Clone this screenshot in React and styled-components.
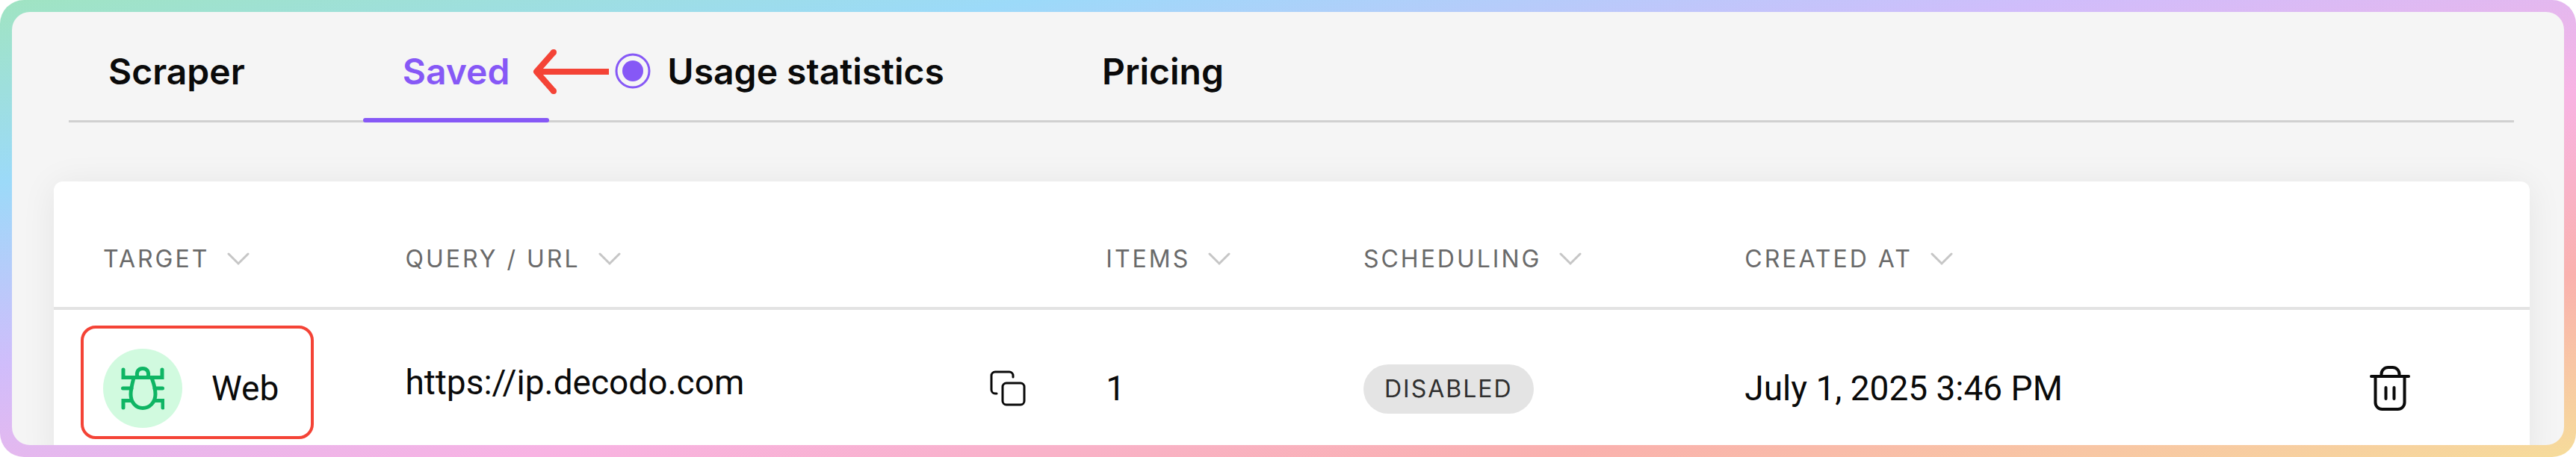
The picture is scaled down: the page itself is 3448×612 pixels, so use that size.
import React from "react";
import styled, { createGlobalStyle } from "styled-components";

const GlobalStyle = createGlobalStyle`
  *, *::before, *::after {
    box-sizing: border-box;
  }

  body {
    margin: 0;
    background: #fff;
    color: #0a0a0a;
    font-family: Inter, "Noto Sans", sans-serif;
  }
`;

const StyledFrame = styled.div`
  height: 100vh;
  padding: 16px;
  border-radius: 32px;
  background: linear-gradient(
    to bottom right,
    #a0e4c2,
    #9cdaf9 20%,
    #d0bdfb 40%,
    #f8b3e3 60%,
    #fab1ae 80%,
    #f6dc9a
  );
`;

const StyledPage = styled.main`
  height: 100%;
  padding-top: 12px;
  overflow: hidden;
  border-radius: 24px;
  background: #f5f5f5;
`;

const StyledTabs = styled.nav`
  display: flex;
  gap: 105px;
  margin: 0 67px 0 76px;
  border-bottom: 3px solid #d0d0d0;
`;

const StyledTab = styled.a`
  position: relative;
  padding: 36px 53px 33px;
  color: ${({ $active }) => ($active ? "#8658f6" : "#0a0a0a")};
  font-size: 48px;
  font-weight: 600;
  line-height: 64px;
  text-decoration: none;
  white-space: nowrap;

  &::after {
    content: "";
    display: ${({ $active }) => ($active ? "block" : "none")};
    position: absolute;
    left: 0;
    right: 0;
    bottom: -3px;
    height: 6px;
    border-radius: 3px;
    background: #8658f6;
  }
`;

const StyledPointer = styled.svg`
  position: absolute;
  left: 100%;
  top: 34px;
  width: 160px;
  height: 68px;
  margin-left: -24px;
  z-index: 1;
`;

const StyledCard = styled.section`
  margin: 79px 46px 0 56px;
  border-radius: 12px;
  background: #fff;
  box-shadow: 0 4px 48px rgba(0, 0, 0, 0.07);
`;

const StyledTable = styled.table`
  width: 100%;
  table-layout: fixed;
  border-collapse: separate;
  border-spacing: 0;
`;

const StyledCol = styled.col`
  width: ${({ $width }) => $width};
`;

const StyledHeadCell = styled.th`
  padding: 80px 33px 40px;
  border-bottom: 4px solid #e3e3e3;
  text-align: left;

  &:first-child {
    padding-left: 66px;
  }
`;

const StyledSort = styled.button`
  display: flex;
  align-items: center;
  gap: 24px;
  padding: 0;
  border: 0;
  background: none;
  color: #6a6a6a;
  font: 400 32px/48px Inter, "Noto Sans", sans-serif;
  letter-spacing: 3px;
  text-transform: uppercase;
  white-space: nowrap;
  cursor: pointer;
`;

const StyledCell = styled.td`
  height: 210px;
  padding: 0 33px;
  font-family: Roboto, sans-serif;
  font-size: 46px;
  line-height: 64px;
  white-space: nowrap;

  &:first-child {
    padding-left: 66px;
  }

  &:last-child {
    padding-right: 152px;
    text-align: right;
  }
`;

const StyledTarget = styled.div`
  position: relative;
  display: inline-flex;
  align-items: center;
  gap: 39px;
`;

const StyledHighlight = styled.span`
  position: absolute;
  inset: -31px -47px -15px -30px;
  border: 4px solid #f44336;
  border-radius: 20px;
`;

const StyledBadge = styled.span`
  display: flex;
  align-items: center;
  justify-content: center;
  width: 106px;
  height: 106px;
  border-radius: 50%;
  background: #d1fadf;
`;

const StyledQuery = styled.div`
  display: flex;
  align-items: center;
  justify-content: space-between;
  padding-right: 33px;
`;

const StyledUrl = styled.a`
  padding-bottom: 16px;
  color: inherit;
  text-decoration: none;
`;

const StyledPill = styled.span`
  display: inline-block;
  padding: 0 28px;
  border-radius: 33px;
  background: #e4e4e4;
  color: #303030;
  font: 400 32px/66px Inter, "Noto Sans", sans-serif;
  letter-spacing: 2px;
  vertical-align: middle;
`;

const StyledIconButton = styled.button`
  display: inline-flex;
  padding: 8px;
  border: 0;
  background: none;
  color: #0a0a0a;
  vertical-align: middle;
  cursor: pointer;
`;

const tabs = ["Scraper", "Saved", "Usage statistics", "Pricing"];

const columns = [
  { label: "Target", width: "13.2%" },
  { label: "Query / URL", width: "28.3%" },
  { label: "Items", width: "10.4%" },
  { label: "Scheduling", width: "15.4%" },
  { label: "Created at", width: "20%" },
];

const rows = [
  {
    target: "Web",
    url: "https://ip.decodo.com",
    items: 1,
    scheduling: "DISABLED",
    createdAt: "July 1, 2025 3:46 PM",
  },
];

function Pointer() {
  return (
    <StyledPointer viewBox="0 0 160 68" fill="none" aria-hidden="true">
      <path d="M30 8 7 34l23 26M7 34h97" stroke="#f44336" strokeWidth="8" strokeLinecap="butt" strokeLinejoin="round" />
      <circle cx="30" cy="8" r="4" fill="#f44336" />
      <circle cx="30" cy="60" r="4" fill="#f44336" />
      <circle cx="136" cy="33" r="22" stroke="#8658f6" strokeWidth="3" />
      <circle cx="136" cy="33" r="14" fill="#8658f6" />
    </StyledPointer>
  );
}

function Chevron() {
  return (
    <svg width="30" height="18" viewBox="0 0 30 18" fill="none" aria-hidden="true">
      <path d="m2 2 13 13L28 2" stroke="#c6c6c6" strokeWidth="3" strokeLinecap="round" />
    </svg>
  );
}

function BugIcon() {
  return (
    <svg width="58" height="58" viewBox="0 0 58 58" fill="none" stroke="#0fb564" strokeWidth="5" aria-hidden="true">
      <path d="M3 4v10.500h52V4" strokeLinecap="round" />
      <path d="M22 14c-2-7 1-11.500 7-11.500S38 7 36 14" />
      <path d="M17 15c-2 8-4 15-4 22 0 11 7 18.500 16 18.500S46 48 46 37c0-7-2-14-5-22" />
      <path d="M2.500 29H14M45 29h10.500" strokeLinecap="round" />
      <path d="M3 55V45.500h11M56 55V45.500H45" strokeLinecap="round" />
    </svg>
  );
}

function CopyIcon() {
  return (
    <svg width="48" height="48" viewBox="0 0 48 48" fill="none" stroke="currentColor" strokeWidth="3" strokeLinecap="round">
      <rect x="17" y="17" width="29" height="29" rx="5" />
      <path d="M9 31H7a5 5 0 0 1-5-5V7a5 5 0 0 1 5-5h19a5 5 0 0 1 5 5v2" />
    </svg>
  );
}

function TrashIcon() {
  return (
    <svg width="54" height="62" viewBox="0 0 54 62" fill="none" stroke="currentColor" strokeWidth="4" strokeLinecap="round">
      <path d="M2 15h50" />
      <path d="M15.500 15v-3a9 9 0 0 1 9-9h6a9 9 0 0 1 9 9v3" />
      <path d="M7.500 15v35a9 9 0 0 0 9 9h21a9 9 0 0 0 9-9V15" />
      <path d="M21.500 30v15M32.500 30v15" />
    </svg>
  );
}

function SavedTable() {
  return (
    <StyledTable>
      <colgroup>
        {columns.map(({ label, width }) => (
          <StyledCol key={label} $width={width} />
        ))}
        <col />
      </colgroup>
      <thead>
        <tr>
          {columns.map(({ label }) => (
            <StyledHeadCell key={label} scope="col">
              <StyledSort type="button">
                {label}
                <Chevron />
              </StyledSort>
            </StyledHeadCell>
          ))}
          <StyledHeadCell as="td" />
        </tr>
      </thead>
      <tbody>
        {rows.map((row) => (
          <tr key={row.url}>
            <StyledCell>
              <StyledTarget>
                <StyledHighlight />
                <StyledBadge>
                  <BugIcon />
                </StyledBadge>
                {row.target}
              </StyledTarget>
            </StyledCell>
            <StyledCell>
              <StyledQuery>
                <StyledUrl href={row.url}>{row.url}</StyledUrl>
                <StyledIconButton type="button" aria-label="Copy">
                  <CopyIcon />
                </StyledIconButton>
              </StyledQuery>
            </StyledCell>
            <StyledCell>{row.items}</StyledCell>
            <StyledCell>
              <StyledPill>{row.scheduling}</StyledPill>
            </StyledCell>
            <StyledCell>{row.createdAt}</StyledCell>
            <StyledCell>
              <StyledIconButton type="button" aria-label="Delete">
                <TrashIcon />
              </StyledIconButton>
            </StyledCell>
          </tr>
        ))}
      </tbody>
    </StyledTable>
  );
}

function App() {
  return (
    <>
      <GlobalStyle />
      <StyledFrame>
        <StyledPage>
          <StyledTabs>
            {tabs.map((tab) => (
              <StyledTab key={tab} href="#" $active={tab === "Saved"}>
                {tab}
                {tab === "Saved" && <Pointer />}
              </StyledTab>
            ))}
          </StyledTabs>
          <StyledCard>
            <SavedTable />
          </StyledCard>
        </StyledPage>
      </StyledFrame>
    </>
  );
}

export default App;
